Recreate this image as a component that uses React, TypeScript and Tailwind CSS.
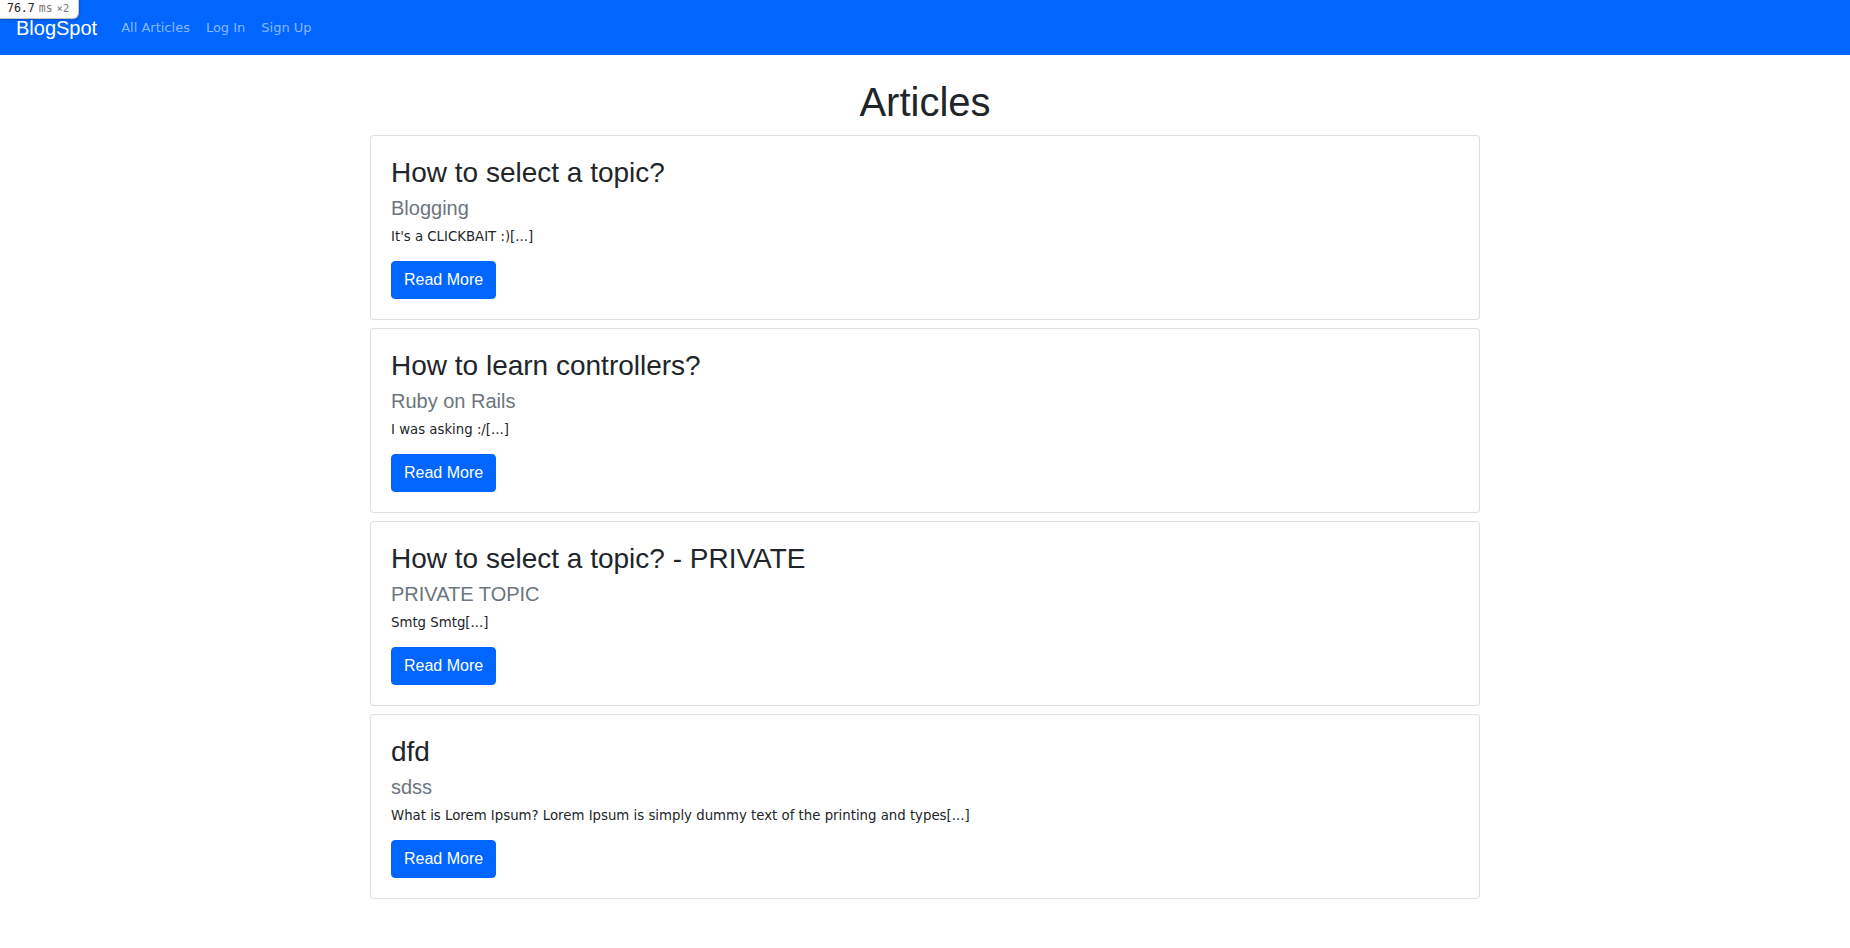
import React from "react";

type Article = {
  id: number;
  title: string;
  topic: string;
  excerpt: string;
};

const articles: Article[] = [
  { id: 1, title: "How to select a topic?", topic: "Blogging", excerpt: "It's a CLICKBAIT :)" },
  { id: 2, title: "How to learn controllers?", topic: "Ruby on Rails", excerpt: "I was asking :/" },
  { id: 3, title: "How to select a topic? - PRIVATE", topic: "PRIVATE TOPIC", excerpt: "Smtg Smtg" },
  {
    id: 4,
    title: "dfd",
    topic: "sdss",
    excerpt: "What is Lorem Ipsum? Lorem Ipsum is simply dummy text of the printing and types",
  },
];

const ProfilerBadge = () => (
  <div className="absolute left-0 top-0 z-50 flex h-[19px] w-[79px] items-center gap-[4px] rounded-br-[6px] border-b border-r border-[#c8c8c8] bg-white pl-[7px] font-['DejaVu_Sans_Mono',monospace] shadow-[0_1px_3px_rgba(0,0,0,0.25)]">
    <span className="text-[11.5px] text-[#222]">76.7</span>
    <span className="text-[11.5px] text-[#777]">ms</span>
    <span className="text-[10.5px] text-[#777]">×2</span>
  </div>
);

const ArticleCard = ({ article }: { article: Article }) => (
  <div className="mb-[8px] rounded-[4px] border border-[rgba(0,0,0,0.125)] bg-white">
    <div className="p-[20px]">
      <h3 className="mb-[6px] font-['Liberation_Sans',Arial,sans-serif] text-[28px] leading-[1.2] text-[#212529]">
        {article.title}
      </h3>
      <h5 className="mb-[7px] font-['Liberation_Sans',Arial,sans-serif] text-[20px] leading-[1.2] text-[#6c757d]">
        {article.topic}
      </h5>
      <p className="mb-[15px] font-['DejaVu_Sans',sans-serif] text-[13.3px] leading-[19.5px] text-[#212529]">
        {article.excerpt}[...]
      </p>
      <a
        href="#"
        className="inline-block rounded-[4px] border border-[#0066ff] bg-[#0066ff] px-[12px] py-[6px] font-['Liberation_Sans',Arial,sans-serif] text-[16px] leading-[24px] text-white"
      >
        Read More
      </a>
    </div>
  </div>
);

const App = () => {
  return (
    <div className="relative min-h-screen bg-white">
      <ProfilerBadge />
      <nav className="flex h-[55px] items-center bg-[#0066ff] px-[16px]">
        <a href="#" className="mr-[16px] font-['Liberation_Sans',Arial,sans-serif] text-[20px] leading-[30px] text-white">
          BlogSpot
        </a>
        <div className="flex font-['DejaVu_Sans',sans-serif] text-[13px] text-[rgba(255,255,255,0.55)]">
          <a href="#" className="px-[8px]">All Articles</a>
          <a href="#" className="px-[8px]">Log In</a>
          <a href="#" className="px-[8px]">Sign Up</a>
        </div>
      </nav>
      <div className="mx-auto w-[1140px] px-[15px]">
        <h1 className="mb-[9px] mt-[23px] text-center font-['Liberation_Sans',Arial,sans-serif] text-[40px] leading-[1.2] text-[#212529]">
          Articles
        </h1>
        {articles.map((article) => (
          <ArticleCard key={article.id} article={article} />
        ))}
      </div>
    </div>
  );
};

export default App;
